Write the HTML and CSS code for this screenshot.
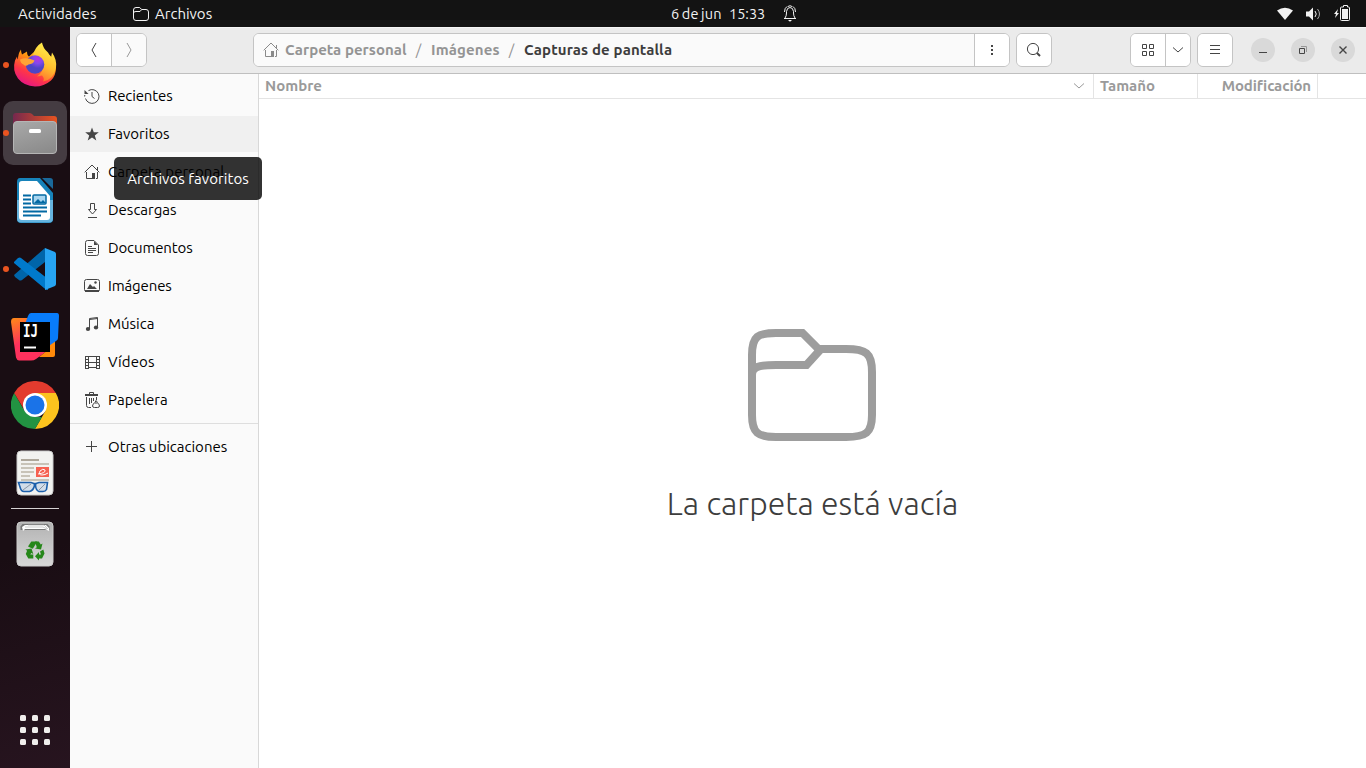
FILE: index.html
```html
<!DOCTYPE html>
<html lang="es">
<head>
<meta charset="utf-8">
<title>Archivos</title>
<link rel="stylesheet" href="styles.css">
</head>
<body>
<header class="topbar">
  <div class="top-left">
    <span class="activities">Actividades</span>
    <svg class="top-folder" width="16" height="14" viewBox="0 0 16 14" fill="none" stroke="#f2f2f2"><path d="M.5 11V3Q.5.500 3 .5h3.700l2 2H13q2.500 0 2.500 2.500v6q0 2.500-2.500 2.500H3Q.5 13.500.5 11zM.5 6q0-1.500 2.500-1.500h4l1.700-2"/></svg>
    <span class="app-name">Archivos</span>
  </div>
  <div class="top-center">
    <span class="date">6 de jun</span>
    <span class="time">15:33</span>
    <svg class="bell" width="14" height="17" viewBox="0 0 14 17" fill="none" stroke="#f2f2f2"><path d="M1 13.500h12M2 13q1.500-2 1.500-5V6.500Q4 2.500 7 2.500t3.500 4V8q0 3 1.500 5M1.500 7Q1.500 3 4 1.500M12.500 7q0-4-2.500-5.500M5 2Q5 .8 7 .8T9 2"/><path d="M5 15h4l-2 1.800z" fill="#fff" stroke="none"/></svg>
  </div>
  <div class="top-right">
    <svg width="16" height="14" viewBox="0 0 16 14"><path d="M0 3.500Q8-2 16 3.500L8 13z" fill="#f2f2f2"/></svg>
    <svg width="15" height="14" viewBox="0 0 15 14" fill="none" stroke="#f2f2f2"><path d="M0 4.500h3L7 .5v13l-4-4H0z" fill="#f2f2f2" stroke="none"/><path d="M9 4q2.500 3 0 6"/><path d="M11.500 2q4 5 0 10" stroke="#aaa"/></svg>
    <svg class="battery" width="17" height="16" viewBox="0 0 17 16"><path d="M4 4L0 9h2l-1 4 4-5H3z" fill="#f2f2f2"/><path d="M9.500.500h4v1.500h1q1 0 1 1V14.500q0 1-1 1h-7q-1 0-1-1V3q0-1 1-1h2z" fill="none" stroke="#f2f2f2"/><rect x="8" y="4" width="6" height="10" fill="#f2f2f2"/></svg>
  </div>
</header>
<div class="desktop">
  <nav class="dock">
    <div class="dock-item running">
      <svg width="48" height="48" viewBox="0 0 48 48">
        <defs>
          <linearGradient id="ff1" x1=".8" y1="0" x2=".3" y2="1"><stop offset="0" stop-color="#fff44f"/><stop offset=".4" stop-color="#ff980e"/><stop offset=".72" stop-color="#ff3647"/><stop offset="1" stop-color="#e31587"/></linearGradient>
          <linearGradient id="ff2" x1=".7" y1="0" x2=".4" y2="1"><stop offset="0" stop-color="#fff44f"/><stop offset=".6" stop-color="#ffbd2e"/><stop offset="1" stop-color="#ff7130"/></linearGradient>
          <radialGradient id="ff3" cx=".65" cy=".2"><stop offset="0" stop-color="#b833e1"/><stop offset=".5" stop-color="#8548ec"/><stop offset="1" stop-color="#4e45c5"/></radialGradient>
        </defs>
        <g transform="translate(0 -.5)">
        <path d="M10 9q0 3 1 5l5-3q0 4 2 5l13-12q2 7 8 11 5 4 6 12 0 8-5 13-7 6-16 6-11-.5-17-8Q1 30 4 20l2-4q0 2 1 3 0-6 3-10z" fill="url(#ff1)"/>
        <path d="M31 2q1 6 6 10l3 5 1-5q5 7 4 15-2 12-13 14 2-3-1-6l-5 1q6-4 6-11 0-6-7-9l-3-1q2-9 9-13z" fill="url(#ff2)"/>
        <circle cx="24" cy="24" r="9.300" fill="url(#ff3)"/>
        <path d="M9 19q6-3 14.500 1-1 3.500-6 4-3 2.500-5 0-3-1-3.500-5z" fill="#ffa436"/>
        </g>
      </svg>
    </div>
    <div class="dock-item running active">
      <svg width="48" height="48" viewBox="0 0 48 48">
        <defs><linearGradient id="fo1"><stop offset="0" stop-color="#75284e"/><stop offset="1" stop-color="#e95420"/></linearGradient><linearGradient id="fo2" x1=".3" y1="0" x2=".7" y2="1"><stop offset="0" stop-color="#a6a6a6"/><stop offset="1" stop-color="#8b8b8b"/></linearGradient></defs>
        <g transform="translate(0 -1)"><path d="M2 8q0-3 3-3h13q2 0 3 1l2 2h20q3 0 3 3v12H2z" fill="url(#fo1)"/>
        <rect x="2.500" y="13.500" width="43" height="32" rx="3.500" fill="url(#fo2)" stroke="#b5b5b5"/>
        <rect x="18" y="21" width="12" height="4" rx="1.500" fill="#fff"/></g>
      </svg>
    </div>
    <div class="dock-item">
      <svg width="48" height="48" viewBox="0 0 48 48">
        <path d="M9 1h20l13 15v26q0 4-4 4H10q-4 0-4-4V5q0-4 3-4z" fill="#1783ba"/><path d="M6 23h36v18.500q0 4-4 4H10q-4 0-4-4z" fill="#66b4df"/>
        <path d="M11 4h15l13 15v21q0 3-3 3H11q-3 0-3-3V7q0-3 3-3z" fill="#fff"/><path d="M31 1h8q3 0 3 3v8z" fill="#1a699b"/>
        <path d="M12 18.500h8M12 22.500h8M12 26.500h8M12 30.500h24M12 34.500h24M12 38.500h18" stroke="#0369a3" stroke-width="2"/>
        <rect x="22" y="18" width="13" height="9" rx="1" fill="#a7d5ef" stroke="#0369a3" stroke-width="1.500"/><path d="M23 26l4-4 3 3 2-2 3 3z" fill="#0369a3"/>
      </svg>
    </div>
    <div class="dock-item running">
      <svg width="48" height="48" viewBox="0 0 48 48">
        <path d="M34 3L3 30l1 2 4 3q1 1 3 0l23-18z" fill="#0065a9"/><path d="M3 17l4-4q2-1 3 0l27 21v11q-2 0-4-2L3 18z" fill="#007acc"/>
        <path d="M34 3l10 4q1 1 1 2v30q0 1-1 2l-10 4V3z" fill="#27a4f2"/>
      </svg>
    </div>
    <div class="dock-item">
      <svg width="48" height="48" viewBox="0 0 48 48">
        <defs><linearGradient id="ij1" x1="0" y1="0" x2=".4" y2="1"><stop offset="0" stop-color="#ff8b16"/><stop offset=".6" stop-color="#fe315d"/></linearGradient><linearGradient id="ij2" x1=".9" y1="0" x2=".1" y2="1"><stop offset=".5" stop-color="#087cfa"/><stop offset="1" stop-color="#a259ab"/></linearGradient></defs>
        <path d="M3 5h25l12 25v5L25 46q-2 1.500-5 1.500H8q-2 0-3-3L0 9q0-4 3-4z" fill="url(#ij1)"/><path d="M34 28h10v14q0 2-2 2H28l9-7z" fill="#ff8a0b"/>
        <path d="M20 0h26q2 0 2 3l-1 22q0 2-2 3l-13 9L12 16l5-13q1-3 3-3z" fill="url(#ij2)"/>
        <path d="M9 9h30v30H9z"/><path d="M13 34.500h12" stroke="#fff" stroke-width="2"/>
        <text x="12" y="24" class="ij-label" textLength="15" lengthAdjust="spacingAndGlyphs">IJ</text>
      </svg>
    </div>
    <div class="dock-item">
      <svg width="48" height="48" viewBox="0 0 48 48">
        <path d="M24 24L3.200 12A24 24 0 0 1 44.800 12z" fill="#e33b2e"/><path d="M24 12h20.800A24 24 0 0 1 24 48l10.400-18z" fill="#fcc31e"/><path d="M3.200 12l10.400 18L24 36h7l-7 12A24 24 0 0 1 3.200 12z" fill="#229342"/>
        <path d="M3.200 12L14 30l6-18z" fill="#e33b2e"/>
        <circle cx="24" cy="24" r="12" fill="#fff"/><circle cx="24" cy="24" r="9.500" fill="#1a73e8"/>
      </svg>
    </div>
    <div class="dock-item">
      <svg width="48" height="48" viewBox="0 0 48 48">
        <rect x="6" y="2" width="36" height="44" rx="4" fill="#f2f2f0" stroke="#ccc"/>
        <path d="M10 11h18" stroke="#aea79b" stroke-width="2"/><path d="M10 15h28M10 19h13M10 23h13M10 27h9M10 31h28" stroke="#c8c3b8" stroke-width="2"/>
        <rect x="25" y="18" width="13" height="10" fill="#f66151"/><path d="M27 25q8-1 7-4-2-2-5 1-2 4 2 4 3 0 6-2" fill="none" stroke="#fff"/>
        <path d="M12 41l8-6M28 41l6-6" stroke="#888"/><path d="M7.500 33.500H20l3 1h2l3-1h8.500l-1 7q-1 2-3.500 2h-4q-3-1-3.500-6h-1q-1 5-5 6H13q-3 0-4-4.500zM22.500 35.500h3" fill="#94b4dc55" stroke="#1c5fab" stroke-width="1.600"/>
      </svg>
    </div>
    <div class="dock-separator"></div>
    <div class="dock-item">
      <svg width="48" height="48" viewBox="0 0 48 48">
        <defs><linearGradient id="tr" x2="0" y2="1"><stop offset="0" stop-color="#b2b2b2"/><stop offset="1" stop-color="#d8d8d8"/></linearGradient></defs>
        <rect x="6" y="2" width="36" height="44" rx="4" fill="url(#tr)" stroke="#ccc"/><path d="M9.500 10V6.500l2-2.500h25l2 2.500V10" fill="#777"/><path d="M12 11l-1-4 3-2h21l3 3v3l-4-2H14z" fill="#fff"/><path d="M14 7h18l4 2M17 5h16l4 4" fill="none" stroke="#aaa" stroke-width=".6"/>
        <g fill="#26871a">
          <path d="M17 26.500l3.300-5h6l-4.500 7.200z"/><path d="M24 21.500h3.800l2 3 1.700-1-1.500 6-6-1 1.800-1.200z"/>
          <path d="M29 31.500l3.300-2 1.200 4-2.500 5h-3v2l-4-4.200 4-4.300v2.500h2z"/>
          <path d="M14.500 29.500l6-1 1.800 5.500-2-1-1 1.500h3v4h-5l-2.500-4.500 1.300-3.300z"/>
        </g>
      </svg>
    </div>
    <div class="apps-grid"><i></i><i></i><i></i><i></i><i></i><i></i><i></i><i></i><i></i></div>
  </nav>
  <main class="window">
    <div class="headerbar">
      <div class="button-group nav-buttons">
        <button><svg width="8" height="16" viewBox="0 0 8 16"><path d="M6 1L2 8l4 7"/></svg></button>
        <button class="disabled"><svg width="8" height="16" viewBox="0 0 8 16"><path d="M2 1l4 7-4 7"/></svg></button>
      </div>
      <div class="button-group pathbar">
        <div class="crumbs">
          <svg class="home-icon" width="16" height="16" viewBox="0 0 16 16"><path d="M.7 8.300L8 1l7.300 7.300M2.500 8v6.500H8M13.500 8v6.500H12M13.500 3v3"/><path d="M8 9h3v6H8z" class="solid"/></svg>
          <span class="c-home">Carpeta personal</span><span class="slash">/</span><span class="c-images">Imágenes</span><span class="slash">/</span><span class="current">Capturas de pantalla</span>
        </div>
        <button><svg width="4" height="12" viewBox="0 0 4 12"><path class="solid" d="M1 1h2v2H1zM1 5h2v2H1zM1 9h2v2H1z"/></svg></button>
      </div>
      <div class="button-group search"><button><svg width="16" height="16" viewBox="0 0 16 16"><circle cx="7" cy="7" r="5.600"/><path d="M11 11l3 3" stroke-width="2"/></svg></button></div>
      <div class="button-group view">
        <button><svg width="12" height="12" viewBox="0 0 12 12"><path d="M.5.500h4v4h-4zM7.500.500h4v4h-4zM.5 7.500h4v4h-4zM7.500 7.500h4v4h-4z"/></svg></button>
        <button class="narrow"><svg width="12" height="6" viewBox="0 0 12 6"><path d="M1 .5L6 5l5-4.500"/></svg></button>
      </div>
      <div class="button-group menu"><button><svg width="10" height="10" viewBox="0 0 10 10"><path d="M0 .5h10M0 4.500h10M0 8.500h10"/></svg></button></div>
      <div class="window-controls">
        <button><svg width="8" height="8" viewBox="0 0 8 8"><path d="M0 6.500h8"/></svg></button>
        <button><svg width="8" height="8" viewBox="0 0 8 8"><path d="M.5 2.500h5v5h-5z"/><path d="M2 .5h5.500V6" stroke="#999"/></svg></button>
        <button><svg width="8" height="8" viewBox="0 0 8 8"><path d="M.5.500l7 7M7.500.500l-7 7" stroke-width="1.400"/></svg></button>
      </div>
    </div>
    <div class="content">
      <aside class="sidebar">
        <div class="place"><svg width="16" height="16" viewBox="0 0 16 16"><path d="M4.500 2.600A6.900 6.900 0 1 1 1.500 10.500M.6 8.500l.2-1.500M8 4v4.500l2.500 2"/><path class="solid" d="M.5 2v4H4.500z"/></svg><span class="tight">Recientes</span></div>
        <div class="place hovered"><svg width="16" height="16" viewBox="0 0 16 16"><path class="solid" d="M8 1.500l1.800 4.700h5l-4 3.200 1.500 5L8 11.500l-4.300 2.900 1.500-5-4-3.200h5z"/></svg><span>Favoritos</span></div>
        <div class="place"><svg width="16" height="16" viewBox="0 0 16 16"><path d="M.7 8.300L8 1l7.300 7.300M2.500 8v6.500H8M13.500 8v6.500H12M13.500 3v3"/><path d="M8 9h3v6H8z" class="solid"/></svg><span class="loose">Carpeta personal</span></div>
        <div class="place"><svg width="16" height="16" viewBox="0 0 16 16"><path d="M6.500 1.500h4v6h2l-4 4.500-4-4.500h2zM4 15.500h9"/></svg><span>Descargas</span></div>
        <div class="place"><svg width="16" height="16" viewBox="0 0 16 16"><path d="M3.500.500H10l4.500 4.500v8.500q0 2-2 2h-9q-2 0-2-2v-11q0-2 2-2zM4 6.500h4M4 8.500h8M4 10.500h8M4 12.500h5"/><path class="solid" d="M10 1v4h4z"/></svg><span class="tight">Documentos</span></div>
        <div class="place"><svg width="16" height="16" viewBox="0 0 16 16"><rect x=".5" y="1.500" width="15" height="12" rx="2"/><path class="solid" d="M1 12h14v2H1zM3 11l3-5 3 3 1-1 3 3z"/><circle class="solid" cx="11.500" cy="4.500" r="1.200"/></svg><span class="tight">Imágenes</span></div>
        <div class="place"><svg width="16" height="16" viewBox="0 0 16 16"><path d="M5.500 13V2.500l8-1V11M5.500 3.500l8-1"/><ellipse class="solid" cx="4" cy="13" rx="2.200" ry="2"/><ellipse class="solid" cx="12" cy="11.500" rx="2.200" ry="2"/></svg><span>Música</span></div>
        <div class="place"><svg width="16" height="16" viewBox="0 0 16 16"><path d="M1.500 2v13M4.500 2v13M12.500 2v13M15.500 2v13M1 2.500h15M4 8.500h9M4 13.500h9M1 5.500h3M1 8.500h3M1 11.500h3M1 14.500h3M13 5.500h3M13 8.500h3M13 11.500h3M13 14.500h3"/></svg><span class="loose">Vídeos</span></div>
        <div class="place"><svg width="16" height="16" viewBox="0 0 16 16"><path d="M2.500 5v8.500q0 2 2 2H7M12.500 5v3M5.500 6v6M7.500 6v5M9.500 6v3M5.500 2V.500h4V2"/><path class="solid" d="M1 2h13v2H1z"/><path d="M11 10.500l1-2 1.500 2M10.500 11q-2 1-2 3 0 1.500 2 1.500h3q2 0 2-1.500 0-2-2-3z"/></svg><span class="loose">Papelera</span></div>
        <div class="place-divider"></div>
        <div class="place"><svg width="16" height="16" viewBox="0 0 16 16"><path d="M2 7.500h11M7.500 2v11"/></svg><span>Otras ubicaciones</span></div>
        <div class="tooltip">Archivos favoritos</div>
      </aside>
      <section class="files">
        <div class="columns">
          <div class="col name"><span>Nombre</span><svg width="12" height="6" viewBox="0 0 12 6"><path d="M1 .5L6 5l5-4.500"/></svg></div>
          <div class="col size"><span>Tamaño</span></div>
          <div class="col modified"><span>Modificación</span></div>
          <div class="col rest"></div>
        </div>
        <div class="empty">
          <svg width="128" height="112" viewBox="0 0 128 112" fill="none" stroke="#9d9d9d" stroke-width="8"><path d="M4 86V26C4 7 10 4 28 4h26.500l16 16H98c20 0 26 4 26 23v43c0 18-6 22-26 22H28C10 108 4 104 4 86zM4 46c0-8 6-10 24-10h30.500L73 20"/></svg>
          <h1>La carpeta está vacía</h1>
        </div>
      </section>
    </div>
  </main>
</div>
</body>
</html>
```
FILE: styles.css
```css
* { box-sizing: border-box; }
body { margin: 0; width: 1366px; height: 768px; overflow: hidden; font: 15px/20px Ubuntu, "Noto Sans", sans-serif; color: #000; background: #fff; }
svg { display: block; flex: none; }
.topbar { height: 27px; background: #131313; color: #f2f2f2; display: grid; grid-template-columns: 671px 1fr auto; align-items: center; white-space: nowrap; }
.top-left, .top-center, .top-right { display: flex; align-items: center; }
.top-left { padding-left: 18px; }
.activities { width: 79px; margin-right: 36px; letter-spacing: .12px; }
.top-folder { margin-right: 6px; }
.date { width: 51px; margin-right: 7px; font-size: 14.500px; word-spacing: -1px; letter-spacing: .15px; }
.time { width: 36px; margin-right: 18px; font-size: 14.500px; }
.top-right { gap: 13px; padding-right: 15px; }
.battery { margin-bottom: 2px; }
.desktop { display: flex; height: 741px; }
.dock { width: 70px; background: linear-gradient(165deg, #190d13 0 70%, #27141f); display: flex; flex-direction: column; align-items: center; padding-top: 6px; flex: none; }
.dock-item { width: 64px; height: 64px; margin-bottom: 4px; border-radius: 10px; display: flex; align-items: center; justify-content: center; position: relative; flex: none; }
.dock-item.active { background: #453c42; }
.dock-item.running::before { content: ""; position: absolute; left: 0; top: 29px; width: 6px; height: 6px; border-radius: 50%; background: #e95420; }
.dock-separator { width: 48px; height: 1px; background: #d5d2d3; margin: -1px 0 3px; }
.ij-label { font: bold 17px "DejaVu Sans Mono", monospace; fill: #fff; }
.apps-grid { margin-top: auto; margin-bottom: 23px; display: grid; grid-template-columns: repeat(3, 6px); gap: 6px; }
.apps-grid i { width: 6px; height: 6px; background: #f0eeec; border-radius: 1.500px; }
.window { flex: 1; display: flex; flex-direction: column; min-width: 0; }
.headerbar { height: 47px; background: #ebebeb; border-bottom: 1px solid #bfbfbf; border-top: 1px solid #f6f6f6; padding: 5px 11px 0 6px; display: flex; align-items: flex-start; flex: none; }
.button-group { display: flex; height: 34px; border: 1px solid #c4c4c4; border-radius: 6px; background: #fff; overflow: hidden; }
button { border: 0; padding: 0; background: #fff; display: flex; align-items: center; justify-content: center; width: 34px; height: 32px; }
button + button, .crumbs + button { border-left: 1px solid #c4c4c4; width: 35px; }
button svg, .crumbs svg, .place svg, .col svg { fill: none; stroke: #454545; }
.place .solid, button .solid { fill: #454545; stroke: none; }
.disabled { background: #fafafa; }
.disabled svg { stroke: #999; }
.nav-buttons { width: 71px; margin-right: 106px; }
.pathbar { width: 757px; margin-right: 6px; }
.crumbs { flex: 1; background: #fafafa; display: flex; align-items: center; padding-left: 9px; font-weight: 700; color: #949494; white-space: nowrap; }
.crumbs .home-icon { margin-right: 6px; stroke: #8a8a8a; }
.crumbs .solid { fill: #8a8a8a; stroke: none; }
.c-home { width: 122px; letter-spacing: .04px; }
.slash { width: 24px; padding-right: 1px; text-align: center; font-weight: 400; }
.c-images { width: 69px; letter-spacing: .15px; }
.current { color: #3d3d3d; letter-spacing: .12px; }
.search { width: 36px; margin-right: 78px; }
.view { width: 61px; margin-right: 6px; }
.view button + button { width: 25px; }
.menu { width: 36px; margin-right: 18px; }
.window-controls { display: flex; gap: 16px; padding-top: 5px; }
.window-controls button { width: 24px; height: 24px; border: 0; border-radius: 50%; background: #d9d9d9; }
.content { flex: 1; display: flex; min-height: 0; }
.sidebar { width: 189px; background: #fafafa; border-right: 1px solid #d8d8d8; padding-top: 4px; position: relative; }
.place { height: 36px; margin-bottom: 2px; padding-left: 14px; display: flex; align-items: center; gap: 8px; white-space: nowrap; }
.tight { letter-spacing: -.13px; }
.loose { letter-spacing: .08px; }
.hovered { background: #f0f0f0; }
.place-divider { height: 1px; background: #dedede; margin: 5px 0 5px; }
.tooltip { position: absolute; left: 44px; top: 83px; width: 148px; height: 43px; border-radius: 5px; background: rgba(0,0,0,.8); color: #fff; display: flex; align-items: center; justify-content: center; letter-spacing: .06px; white-space: nowrap; z-index: 2; }
.files { flex: 1; display: flex; flex-direction: column; }
.columns { display: flex; height: 25px; border-bottom: 1px solid #e4e4e4; color: #9a9a9a; font-weight: 700; }
.col { border-right: 1px solid #e4e4e4; display: flex; align-items: center; padding: 0 6px; }
.name { width: 835px; justify-content: space-between; padding-right: 8px; }
.col svg { stroke: #999; }
.size { width: 104px; }
.modified { width: 120px; justify-content: flex-end; letter-spacing: -.12px; }
.rest { flex: 1; border: 0; }
.empty { flex: 1; display: flex; flex-direction: column; align-items: center; padding: 230px 1px 0 0; }
h1 { font-weight: 300; font-size: 32px; line-height: 44px; margin: 40px 0 0 1px; color: #3d3d3d; white-space: nowrap; }
```
